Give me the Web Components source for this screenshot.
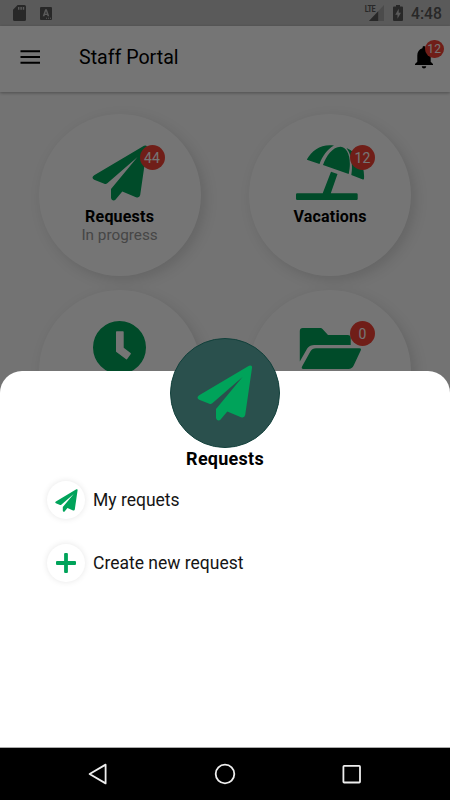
<!DOCTYPE html>
<html lang="en">
<head>
<meta charset="utf-8">
<title>Staff Portal</title>
<style>
  html, body { margin: 0; height: 100%; overflow: hidden; }
  body { font-family: Roboto, 'Liberation Sans', sans-serif; color: #000; }
</style>
</head>
<body>
<staff-app></staff-app>

<script>
(function () {
  var GREEN = '#00a35a';

  // Icon shapes: [viewBox, markup]. Everything fills with currentColor.
  var ICONS = {
    plane: ['0 0 56 56', '<path d="M52 .8Q55.5-.6 55 3L48.2 50Q47.5 53.3 44 52.2L30.3 46.5L23.4 54.7C22 56.3 19 55.3 19 52.5V44L45.5 12L15.3 38.3Q14 39.5 12.3 38.8L2.2 34.8Q-1.2 32.6 2.2 30.2Z"/>'],
    beach: ['0 0 69 56', '<path d="M11 14.3C16 5 26-1.500 38 .5C31 4.500 26.500 11 23.500 18.900L11.600 15Q10.800 14.800 11 14.300ZM27 20C30 11 37 1.500 44.700 1.700C52 2.200 56 14 52.700 29.100ZM55.300 30C57 19 55.500 10 50.500 3C62 8 69 20 68 33.800Q67.900 34.800 66.900 34.400ZM35 26.700L41.500 29L34.800 48.300H60.500Q61.700 48.300 61.700 49.500V53.800Q61.700 55 60.500 55H1.200Q0 55 0 53.800V49.500Q0 48.300 1.200 48.300H26.700Z"/>'],
    clock: ['0 0 53 53', '<path fill-rule="evenodd" d="M26.500 0a26.500 26.500 0 1 0 0 53a26.500 26.500 0 0 0 0-53ZM23.700 10.200H30Q30.700 10.200 30.700 10.900V26.800L37.600 31.900Q38.200 32.400 37.800 33L34.200 38Q33.700 38.700 33.100 38.200L23.400 31Q23 30.700 23 30.200V10.900Q23 10.200 23.700 10.200Z"/>'],
    folder: ['0 0 63 42', '<path d="M.8 3Q.8 0 3.800 0H21.500Q22.700 0 23.500 .9L29 7H48.700Q51.700 7 51.700 10V17H17C11.500 17 9.500 18.200 7.500 21.800L.8 33.500ZM17 20.300H60.500Q62.700 20.300 61.700 22.500L54.800 37.200Q53 41 49.500 41H4.500Q1.700 41 3.200 38.300L11.500 23.300Q13.200 20.300 17 20.300Z"/>'],
    plus: ['0 0 20 20', '<path d="M8.100 1Q8.100 0 9.100 0H10.900Q11.900 0 11.900 1V8.100H19Q20 8.100 20 9.100V10.900Q20 11.900 19 11.900H11.900V19Q11.900 20 10.900 20H9.100Q8.100 20 8.100 19V11.900H1Q0 11.900 0 10.900V9.100Q0 8.100 1 8.100H8.100Z"/>'],
    menu: ['0 0 24 24', '<path d="M2.500 5.300h19.500v2h-19.500zM2.500 11h19.500v2h-19.500zM2.500 16.700h19.500v2h-19.500z"/>'],
    bell: ['0 0 18 23', '<path d="M9 0Q10.600 0 10.600 2.200C14 3.300 15.700 6 15.700 9.500V15.800L18 18.100V19H0V18.100L2.300 15.800V9.500C2.300 6 4 3.300 7.400 2.200Q7.400 0 9 0ZM6.700 20.200H11.300Q11 22.500 9 22.500Q7 22.500 6.700 20.200Z"/>'],
    sd: ['0 0 13 16', '<path fill-rule="evenodd" d="M4.600 0H11.500Q13 0 13 1.500V14.500Q13 16 11.500 16H1.500Q0 16 0 14.500V4.800ZM5 2V4.800H6.400V2ZM7.400 2V4.800H8.800V2ZM9.800 2V4.800H11.200V2Z"/>'],
    keyboard: ['0 0 12 13', '<path fill-rule="evenodd" d="M1 0H11Q12 0 12 1V12Q12 13 11 13H1Q0 13 0 12V1Q0 0 1 0ZM5.200 2.300L2.700 9.300H4.400L4.900 7.900H7.100L7.600 9.300H9.300L6.800 2.300ZM6 4.300L6.800 6.700H5.200ZM6 10.700V11.700H7V10.700ZM8 10.700V11.700H9V10.700ZM10 10.700V11.700H11V10.700Z"/>'],
    signal: ['0 0 15 16', '<path opacity=".3" d="M15 0V16H0Z"/><path d="M9.200 6.200V16H0Z"/>'],
    battery: ['0 0 10 16', '<path fill-rule="evenodd" d="M3 0H7V1.500H9Q10 1.500 10 2.500V15Q10 16 9 16H1Q0 16 0 15V2.500Q0 1.500 1 1.500H3ZM5.700 3.700L2.300 9.700H4.500V13.700L7.900 7.700H5.700Z"/>'],
    back: ['0 0 20 22', '<path fill="none" stroke="currentColor" stroke-width="1.800" stroke-linejoin="round" d="M17.600 1.600V20.400L1.600 11Z"/>'],
    home: ['0 0 22 22', '<circle cx="11" cy="11" r="9.300" fill="none" stroke="currentColor" stroke-width="1.800"/>'],
    recents: ['0 0 20 20', '<rect x="1.400" y="1.900" width="16.600" height="16.600" rx=".8" fill="none" stroke="currentColor" stroke-width="1.800"/>']
  };

  function define(name, render) {
    customElements.define(name, class extends HTMLElement {
      connectedCallback() {
        if (this.shadowRoot) return;
        this.attachShadow({ mode: 'open' }).innerHTML = render(this);
      }
    });
  }

  // <app-icon name="plane" w="55" h="55">
  define('app-icon', function (el) {
    var icon = ICONS[el.getAttribute('name')];
    return '<style>:host{display:block;flex:none}svg{display:block}</style>' +
      '<svg width="' + el.getAttribute('w') + '" height="' + el.getAttribute('h') +
      '" viewBox="' + icon[0] + '" fill="currentColor">' + icon[1] + '</svg>';
  });

  define('count-badge', function () {
    return '<style>' +
      ':host{display:flex;align-items:center;justify-content:center;box-sizing:border-box;' +
      'width:25px;height:25px;border-radius:50%;background:#f44336;color:#fff;' +
      'font-size:14px;line-height:1;letter-spacing:.2px}' +
      '</style><slot></slot>';
  });

  define('status-bar', function () {
    return '<style>' +
      ':host{display:flex;align-items:center;height:26px;padding:0 9px 0 13px;' +
      'background:#c4c4c4;color:#585858;box-sizing:border-box}' +
      '.kb{margin-left:14px}.gap{flex:1}' +
      '.lte{font-size:8.500px;font-weight:700;line-height:8px;align-self:flex-start;' +
      'margin:5px -6px 0 0;letter-spacing:-.5px;transform:scaleX(.86);transform-origin:100% 0}' +
      '.bat{margin:0 8px 0 9px}' +
      '.time{font-size:15.700px;font-weight:500;padding-top:1px;width:30px;white-space:nowrap}' +
      '</style>' +
      '<app-icon name="sd" w="13" h="16"></app-icon>' +
      '<app-icon class="kb" name="keyboard" w="12" h="13"></app-icon>' +
      '<span class="gap"></span><span class="lte">LTE</span>' +
      '<app-icon name="signal" w="15" h="16"></app-icon>' +
      '<app-icon class="bat" name="battery" w="10" h="16"></app-icon>' +
      '<span class="time">4:48</span>';
  });

  define('top-bar', function () {
    return '<style>' +
      ':host{display:flex;align-items:center;height:66px;padding:0 17px 4px 18px;box-sizing:border-box;' +
      'background:#fff;box-shadow:0 1px 3px rgba(0,0,0,.32);position:relative}' +
      'h1{flex:1;margin:0 0 0 37px;font-size:19.600px;font-weight:400}' +
      '.bell{position:relative}' +
      'count-badge{position:absolute;left:10px;top:-6px;width:18.500px;height:18.500px;font-size:12px}' +
      '</style>' +
      '<app-icon name="menu" w="24" h="24"></app-icon><h1><slot></slot></h1>' +
      '<div class="bell"><app-icon name="bell" w="18" h="23"></app-icon><count-badge>12</count-badge></div>';
  });

  // Round tile: icon on top, then title and optional note.
  define('menu-tile', function (el) {
    var count = el.getAttribute('count');
    var note = el.getAttribute('note');
    return '<style>' +
      ':host{display:flex;flex-direction:column;align-items:center;box-sizing:border-box;' +
      'width:162px;height:162px;padding-top:31px;border-radius:50%;background:#fff;' +
      'box-shadow:4px 4px 14px rgba(0,0,0,.13);position:relative;text-align:center}' +
      'app-icon{color:' + GREEN + '}' +
      '.art{height:62px}' +
      'b{font-size:16px;line-height:19px;font-weight:700;letter-spacing:.2px}' +
      'small{font-size:15.300px;line-height:19px;color:#999}' +
      'count-badge{position:absolute;left:101px;top:31.500px}' +
      '</style>' +
      '<div class="art"><app-icon name="' + el.getAttribute('icon') + '" w="' + el.getAttribute('w') +
      '" h="' + el.getAttribute('h') + '"></app-icon></div>' +
      '<b><slot></slot></b>' + (note ? '<small>' + note + '</small>' : '') +
      (count ? '<count-badge>' + count + '</count-badge>' : '');
  });

  define('sheet-action', function (el) {
    return '<style>' +
      ':host{display:flex;align-items:center;gap:8px;height:38px;font-size:17.500px}' +
      '.disc{display:flex;align-items:center;justify-content:center;width:38px;height:38px;' +
      'border-radius:50%;background:#fff;color:' + GREEN + ';box-shadow:0 0 6px rgba(0,0,0,.1)}' +
      'span{color:#151515}' +
      '</style>' +
      '<div class="disc"><app-icon name="' + el.getAttribute('icon') + '" w="' + el.getAttribute('size') +
      '" h="' + el.getAttribute('size') + '"></app-icon></div><span><slot></slot></span>';
  });

  define('bottom-sheet', function () {
    return '<style>' +
      ':host{display:flex;flex-direction:column;box-sizing:border-box;background:#fff;' +
      'border-radius:22px 22px 0 0}' +
      '.head{display:flex;align-items:center;justify-content:center;align-self:center;box-sizing:border-box;' +
      'width:110px;height:110px;margin-top:-33.500px;border-radius:50%;background:#2a504d;' +
      'border:1px solid #12403b;color:' + GREEN + '}' +
      'h2{margin:.5px 0 11px;text-align:center;font-size:18px;line-height:22px;font-weight:700;letter-spacing:.25px}' +
      '.list{display:flex;flex-direction:column;gap:25px;padding-left:47px}' +
      '</style>' +
      '<div class="head"><app-icon name="plane" w="56" h="56"></app-icon></div>' +
      '<h2>Requests</h2><div class="list"><slot></slot></div>';
  });

  define('nav-bar', function () {
    return '<style>' +
      ':host{display:flex;align-items:center;justify-content:space-between;box-sizing:border-box;' +
      'height:53px;padding:0 88px;background:#000;color:#eee;border-top:1px solid #aaa}' +
      '</style>' +
      '<app-icon name="back" w="20" h="22"></app-icon>' +
      '<app-icon name="home" w="22" h="22"></app-icon>' +
      '<app-icon name="recents" w="20" h="20"></app-icon>';
  });

  define('staff-app', function () {
    return '<style>' +
      ':host{display:flex;flex-direction:column;position:relative;width:450px;height:800px;overflow:hidden;' +
      'background:#fafafa}' +
      '.page{flex:1;min-height:0;overflow:hidden;display:grid;grid-template-columns:162px 162px;' +
      'grid-auto-rows:162px;gap:14px 48.500px;padding:21.500px 0 0 38.600px}' +
      '.scrim{position:absolute;inset:0;background:rgba(0,0,0,.54)}' +
      'bottom-sheet{position:absolute;left:0;right:0;top:371px;bottom:53px}' +
      'nav-bar{position:relative}' +
      '</style>' +
      '<status-bar></status-bar>' +
      '<top-bar>Staff Portal</top-bar>' +
      '<div class="page">' +
      '<menu-tile icon="plane" w="56" h="56" count="44" note="In progress">Requests</menu-tile>' +
      '<menu-tile icon="beach" w="69" h="56" count="12">Vacations</menu-tile>' +
      '<menu-tile icon="clock" w="53" h="53"></menu-tile>' +
      '<menu-tile icon="folder" w="63" h="56" count="0"></menu-tile>' +
      '</div>' +
      '<div class="scrim"></div>' +
      '<bottom-sheet>' +
      '<sheet-action icon="plane" size="23">My requets</sheet-action>' +
      '<sheet-action icon="plus" size="20">Create new request</sheet-action>' +
      '</bottom-sheet>' +
      '<nav-bar></nav-bar>';
  });
})();
</script>
</body>
</html>
